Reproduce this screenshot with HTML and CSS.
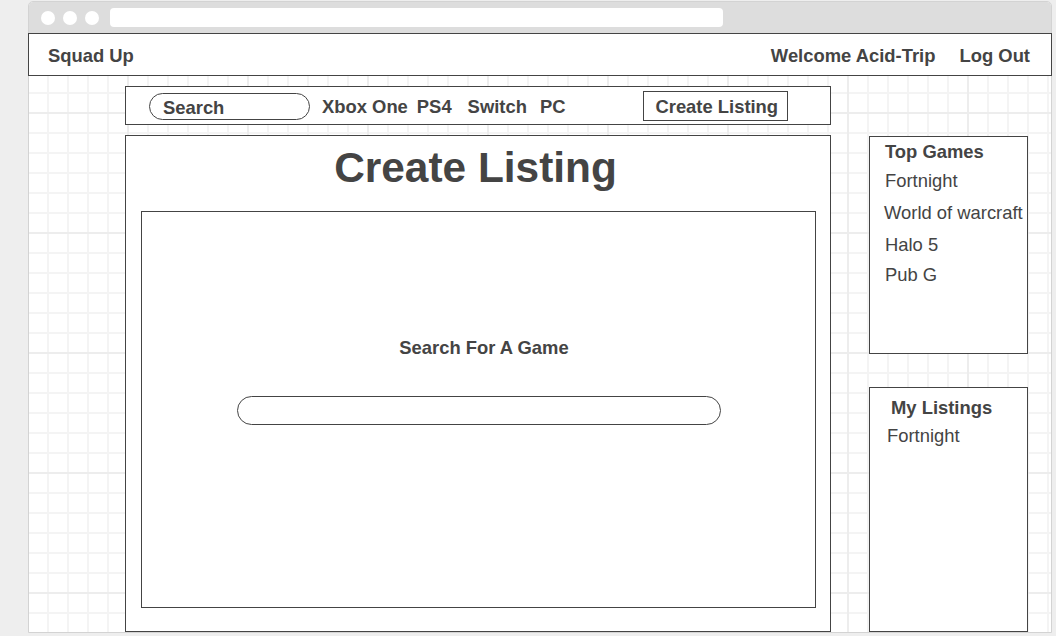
FILE: index.html
```html
<!DOCTYPE html>
<html lang="en">
<head>
<meta charset="utf-8">
<title>Squad Up - Create Listing</title>
<link rel="stylesheet" href="styles.css">
</head>
<body>
<div class="window">
  <div class="chrome">
    <span class="dot"></span>
    <span class="dot"></span>
    <span class="dot"></span>
    <div class="address"></div>
  </div>
  <header class="header">
    <div class="brand">Squad Up</div>
    <div class="user">
      <span class="welcome">Welcome Acid-Trip</span>
      <span class="logout">Log Out</span>
    </div>
  </header>
  <main class="canvas">
    <div class="content">
      <nav class="nav">
        <div class="search">Search</div>
        <span class="nav-link xbox">Xbox One</span>
        <span class="nav-link ps4">PS4</span>
        <span class="nav-link switch">Switch</span>
        <span class="nav-link pc">PC</span>
        <div class="create-btn">Create Listing</div>
      </nav>
      <section class="panel">
        <h1 class="title">Create Listing</h1>
        <div class="inner">
          <div class="label">Search For A Game</div>
          <div class="game-input"></div>
        </div>
      </section>
    </div>
    <aside class="sidebar">
      <div class="card top-games">
        <div class="card-title">Top Games</div>
        <ul class="list">
          <li>Fortnight</li>
          <li class="wow">World of warcraft</li>
          <li class="halo">Halo 5</li>
          <li class="pubg">Pub G</li>
        </ul>
      </div>
      <div class="card my-listings">
        <div class="card-title">My Listings</div>
        <div class="listing">Fortnight</div>
      </div>
    </aside>
  </main>
</div>
</body>
</html>
```
FILE: styles.css
```css
* { box-sizing: border-box; }

html, body {
  margin: 0;
  padding: 0;
}

body {
  background: #eeeeee;
  font-family: "Liberation Sans", Arial, sans-serif;
  color: #444444;
  padding-top: 1px;
}

.window {
  margin-left: 28px;
  width: 1024px;
  height: 632px;
  border: 1px solid #d3d3d3;
  border-radius: 5px 5px 0 0;
  display: flex;
  flex-direction: column;
  background: #ffffff;
}

.chrome {
  height: 31px;
  background: #dddddd;
  border-radius: 4px 4px 0 0;
  display: flex;
  align-items: center;
  padding-left: 12px;
  gap: 8px;
  flex: none;
}

.dot {
  width: 14px;
  height: 14px;
  border-radius: 50%;
  background: #ffffff;
  flex: none;
}

.address {
  margin-left: 3px;
  width: 613px;
  height: 19px;
  background: #ffffff;
  border-radius: 4px;
}

.header {
  margin: 0 -1px;
  height: 43px;
  border: 1px solid #444444;
  background: #ffffff;
  display: flex;
  align-items: center;
  justify-content: space-between;
  padding: 3px 21px 0 19px;
  font-weight: bold;
  font-size: 18.4px;
  flex: none;
}

.welcome { margin-right: 19px; }

.canvas {
  flex: 1;
  display: flex;
  min-height: 0;
  background-color: #ffffff;
  background-image:
    linear-gradient(to right, #ededed 2px, transparent 2px),
    linear-gradient(to bottom, #ededed 2px, transparent 2px),
    linear-gradient(to right, #f4f4f4 2px, transparent 2px),
    linear-gradient(to bottom, #f4f4f4 2px, transparent 2px);
  background-size: 120px 120px, 120px 120px, 20px 20px, 20px 20px;
  background-position: 98px 0, 0 36px, 18px 0, 0 16px;
}

.content {
  margin-left: 96px;
  width: 706px;
  padding-top: 10px;
  display: flex;
  flex-direction: column;
}

.nav {
  height: 39px;
  border: 1px solid #444444;
  background: #ffffff;
  display: flex;
  align-items: center;
  padding-left: 23px;
  font-weight: bold;
  font-size: 18.4px;
  flex: none;
}

.search {
  width: 161px;
  height: 27px;
  border: 1px solid #444444;
  border-radius: 14px;
  padding-left: 13px;
  line-height: 27px;
  margin-top: 1px;
}

.nav-link {
  line-height: 21px;
  padding-top: 2px;
}
.xbox { margin-left: 12px; }
.ps4 { margin-left: 9px; }
.switch { margin-left: 16px; }
.pc { margin-left: 13px; }

.create-btn {
  margin-left: 78px;
  width: 145px;
  height: 30px;
  border: 1px solid #444444;
  padding: 2px 0 0 11px;
  line-height: 26px;
  margin-top: 1px;
}

.panel {
  margin-top: 10px;
  flex: 1;
  border: 1px solid #444444;
  background: #ffffff;
  padding: 8px 14px 0 15px;
}

.title {
  margin: 0;
  text-align: center;
  font-size: 42.4px;
  line-height: 48px;
  font-weight: bold;
  padding-right: 6px;
}

.inner {
  margin-top: 19px;
  height: 397px;
  border: 1px solid #444444;
  display: flex;
  flex-direction: column;
  align-items: center;
  padding-top: 125px;
}

.label {
  font-weight: bold;
  font-size: 18.4px;
  line-height: 21px;
  padding-left: 11px;
}

.game-input {
  margin-top: 38px;
  width: 484px;
  height: 29px;
  border: 1px solid #444444;
  border-radius: 15px;
}

.sidebar {
  margin-left: 38px;
  width: 159px;
  padding-top: 60px;
  display: flex;
  flex-direction: column;
}

.card {
  border: 1px solid #444444;
  background: #ffffff;
  font-size: 18.4px;
}

.card-title {
  font-weight: bold;
  line-height: 21px;
}

.top-games {
  height: 218px;
  padding: 4px 0 0 15px;
  flex: none;
}

.list {
  list-style: none;
  margin: 3px 0 0;
  padding: 0;
}

.list li { line-height: 31px; }
.list .wow { margin: 1px 0 0 -1px; }
.list .halo { margin-top: 1px; }
.list .pubg { margin-top: -1px; }

.my-listings {
  margin-top: 33px;
  flex: 1;
  padding-top: 9px;
}

.my-listings .card-title { padding-left: 21px; }

.listing {
  padding-left: 17px;
  line-height: 30px;
  margin-top: 3px;
}
```
